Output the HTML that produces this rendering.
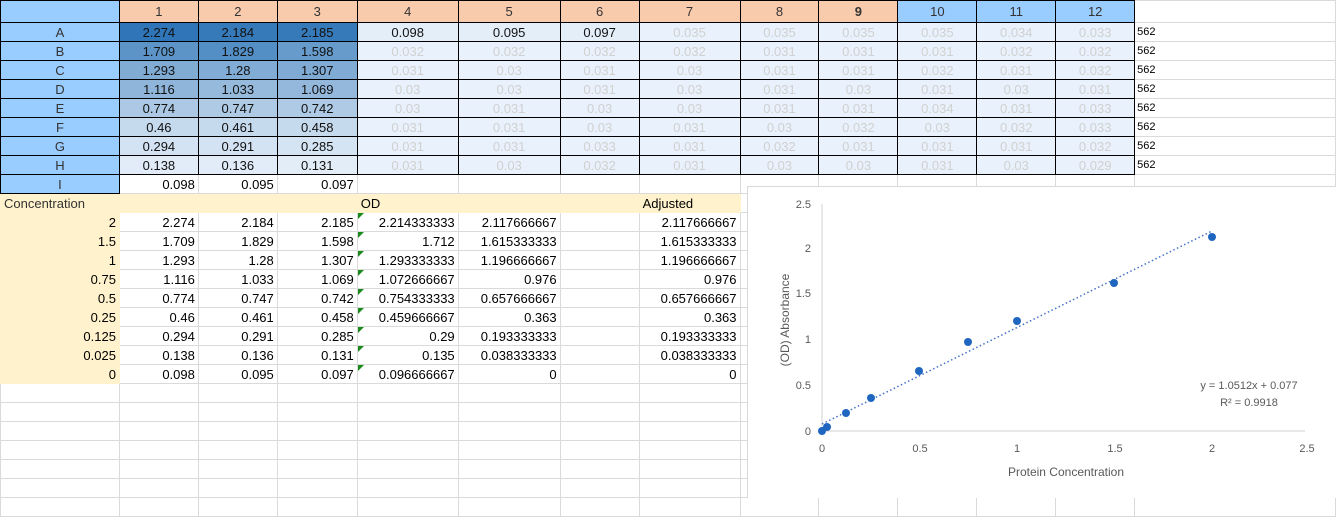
<!DOCTYPE html>
<html><head><meta charset="utf-8"><style>
html,body{margin:0;padding:0;background:#fff;width:1336px;height:498px;overflow:hidden;}
table{border-collapse:collapse;table-layout:fixed;font-family:"Liberation Sans",Arial,sans-serif;font-size:13px;position:absolute;left:0;top:0;}
td{border:1px solid #dadada;padding:0 3px;height:18px;white-space:nowrap;overflow:hidden;text-align:right;line-height:17px;}
tr.h td{height:21px;}
.rh{background:#99ccff;text-align:center;color:#333;border:1px solid #000;}
.ch{background:#f8cbad;text-align:center;color:#333;border:1px solid #000;}
.cb{background:#99ccff;text-align:center;color:#333;border:1px solid #000;}
.k{border:1px solid #000;text-align:center;color:#111;}
.g{border:1px solid #000;text-align:center;background:#e9f2fc;color:#d0d0d0;}
.y{background:#fff2cc;border-color:#fff2cc;}
.s{font-size:11px;text-align:left;padding-left:2px;}
.tri{position:relative;}
.tri:before{content:"";position:absolute;left:0;top:0;border-top:6px solid #1a8a1a;border-right:6px solid transparent;}
</style></head><body>
<table>
<colgroup><col style="width:119px"><col style="width:79px"><col style="width:79px"><col style="width:80px"><col style="width:101px"><col style="width:102px"><col style="width:79px"><col style="width:101px"><col style="width:79px"><col style="width:79px"><col style="width:79px"><col style="width:79px"><col style="width:79px"><col style="width:201px"></colgroup>
<tr class="h"><td class="rh"></td><td class="ch">1</td><td class="ch">2</td><td class="ch">3</td><td class="ch">4</td><td class="ch">5</td><td class="ch">6</td><td class="ch">7</td><td class="ch">8</td><td class="ch"><b>9</b></td><td class="cb">10</td><td class="cb">11</td><td class="cb">12</td><td></td></tr>
<tr><td class="rh">A</td><td class="k" style="background:#2f75b8">2.274</td><td class="k" style="background:#367ab9">2.184</td><td class="k" style="background:#367ab9">2.185</td><td class="k" style="background:#e4eef9">0.098</td><td class="k" style="background:#e4eef9">0.095</td><td class="k" style="background:#e4eef9">0.097</td><td class="g">0.035</td><td class="g">0.035</td><td class="g">0.035</td><td class="g">0.035</td><td class="g">0.034</td><td class="g">0.033</td><td class="s">562</td></tr>
<tr><td class="rh">B</td><td class="k" style="background:#5d94c7">1.709</td><td class="k" style="background:#538ec4">1.829</td><td class="k" style="background:#679bcb">1.598</td><td class="g">0.032</td><td class="g">0.032</td><td class="g">0.032</td><td class="g">0.032</td><td class="g">0.031</td><td class="g">0.031</td><td class="g">0.031</td><td class="g">0.032</td><td class="g">0.032</td><td class="s">562</td></tr>
<tr><td class="rh">C</td><td class="k" style="background:#80acd4">1.293</td><td class="k" style="background:#81acd5">1.28</td><td class="k" style="background:#7fabd4">1.307</td><td class="g">0.031</td><td class="g">0.03</td><td class="g">0.031</td><td class="g">0.03</td><td class="g">0.031</td><td class="g">0.031</td><td class="g">0.032</td><td class="g">0.031</td><td class="g">0.032</td><td class="s">562</td></tr>
<tr><td class="rh">D</td><td class="k" style="background:#8fb6da">1.116</td><td class="k" style="background:#96badc">1.033</td><td class="k" style="background:#93b8db">1.069</td><td class="g">0.03</td><td class="g">0.03</td><td class="g">0.031</td><td class="g">0.03</td><td class="g">0.031</td><td class="g">0.03</td><td class="g">0.031</td><td class="g">0.03</td><td class="g">0.031</td><td class="s">562</td></tr>
<tr><td class="rh">E</td><td class="k" style="background:#acc8e4">0.774</td><td class="k" style="background:#aecae5">0.747</td><td class="k" style="background:#aecae5">0.742</td><td class="g">0.03</td><td class="g">0.031</td><td class="g">0.03</td><td class="g">0.03</td><td class="g">0.031</td><td class="g">0.031</td><td class="g">0.034</td><td class="g">0.031</td><td class="g">0.033</td><td class="s">562</td></tr>
<tr><td class="rh">F</td><td class="k" style="background:#c6daee">0.46</td><td class="k" style="background:#c6daee">0.461</td><td class="k" style="background:#c6daee">0.458</td><td class="g">0.031</td><td class="g">0.031</td><td class="g">0.03</td><td class="g">0.031</td><td class="g">0.03</td><td class="g">0.032</td><td class="g">0.03</td><td class="g">0.032</td><td class="g">0.033</td><td class="s">562</td></tr>
<tr><td class="rh">G</td><td class="k" style="background:#d4e3f3">0.294</td><td class="k" style="background:#d4e3f3">0.291</td><td class="k" style="background:#d5e4f3">0.285</td><td class="g">0.031</td><td class="g">0.031</td><td class="g">0.033</td><td class="g">0.031</td><td class="g">0.032</td><td class="g">0.031</td><td class="g">0.031</td><td class="g">0.031</td><td class="g">0.032</td><td class="s">562</td></tr>
<tr><td class="rh">H</td><td class="k" style="background:#e1ecf8">0.138</td><td class="k" style="background:#e1ecf8">0.136</td><td class="k" style="background:#e2edf8">0.131</td><td class="g">0.031</td><td class="g">0.03</td><td class="g">0.032</td><td class="g">0.031</td><td class="g">0.03</td><td class="g">0.03</td><td class="g">0.031</td><td class="g">0.03</td><td class="g">0.029</td><td class="s">562</td></tr>
<tr><td class="rh">I</td><td>0.098</td><td>0.095</td><td>0.097</td><td style="border-top:1px solid #000"></td><td></td><td></td><td></td><td></td><td></td><td></td><td></td><td></td><td></td></tr>
<tr><td class="y" style="text-align:left;color:#333">Concentration</td><td class="y"></td><td class="y"></td><td class="y"></td><td class="y" style="text-align:left">OD</td><td class="y"></td><td class="y"></td><td class="y" style="text-align:left">Adjusted</td><td></td><td></td><td></td><td></td><td></td><td></td></tr>
<tr><td class="y">2</td><td>2.274</td><td>2.184</td><td>2.185</td><td class="tri">2.214333333</td><td>2.117666667</td><td></td><td>2.117666667</td><td></td><td></td><td></td><td></td><td></td><td></td></tr>
<tr><td class="y">1.5</td><td>1.709</td><td>1.829</td><td>1.598</td><td class="tri">1.712</td><td>1.615333333</td><td></td><td>1.615333333</td><td></td><td></td><td></td><td></td><td></td><td></td></tr>
<tr><td class="y">1</td><td>1.293</td><td>1.28</td><td>1.307</td><td class="tri">1.293333333</td><td>1.196666667</td><td></td><td>1.196666667</td><td></td><td></td><td></td><td></td><td></td><td></td></tr>
<tr><td class="y">0.75</td><td>1.116</td><td>1.033</td><td>1.069</td><td class="tri">1.072666667</td><td>0.976</td><td></td><td>0.976</td><td></td><td></td><td></td><td></td><td></td><td></td></tr>
<tr><td class="y">0.5</td><td>0.774</td><td>0.747</td><td>0.742</td><td class="tri">0.754333333</td><td>0.657666667</td><td></td><td>0.657666667</td><td></td><td></td><td></td><td></td><td></td><td></td></tr>
<tr><td class="y">0.25</td><td>0.46</td><td>0.461</td><td>0.458</td><td class="tri">0.459666667</td><td>0.363</td><td></td><td>0.363</td><td></td><td></td><td></td><td></td><td></td><td></td></tr>
<tr><td class="y">0.125</td><td>0.294</td><td>0.291</td><td>0.285</td><td class="tri">0.29</td><td>0.193333333</td><td></td><td>0.193333333</td><td></td><td></td><td></td><td></td><td></td><td></td></tr>
<tr><td class="y">0.025</td><td>0.138</td><td>0.136</td><td>0.131</td><td class="tri">0.135</td><td>0.038333333</td><td></td><td>0.038333333</td><td></td><td></td><td></td><td></td><td></td><td></td></tr>
<tr><td class="y">0</td><td>0.098</td><td>0.095</td><td>0.097</td><td class="tri">0.096666667</td><td>0</td><td></td><td>0</td><td></td><td></td><td></td><td></td><td></td><td></td></tr>
<tr><td></td><td></td><td></td><td></td><td></td><td></td><td></td><td></td><td></td><td></td><td></td><td></td><td></td><td></td></tr>
<tr><td></td><td></td><td></td><td></td><td></td><td></td><td></td><td></td><td></td><td></td><td></td><td></td><td></td><td></td></tr>
<tr><td></td><td></td><td></td><td></td><td></td><td></td><td></td><td></td><td></td><td></td><td></td><td></td><td></td><td></td></tr>
<tr><td></td><td></td><td></td><td></td><td></td><td></td><td></td><td></td><td></td><td></td><td></td><td></td><td></td><td></td></tr>
<tr><td></td><td></td><td></td><td></td><td></td><td></td><td></td><td></td><td></td><td></td><td></td><td></td><td></td><td></td></tr>
<tr><td></td><td></td><td></td><td></td><td></td><td></td><td></td><td></td><td></td><td></td><td></td><td></td><td></td><td></td></tr>
<tr><td></td><td></td><td></td><td></td><td></td><td></td><td></td><td></td><td></td><td></td><td></td><td></td><td></td><td></td></tr>
</table>
<svg width="1336" height="498" style="position:absolute;left:0;top:0" font-family="Liberation Sans, Arial, sans-serif" font-size="11" fill="#595959">
<rect x="747.5" y="186.5" width="600" height="320" fill="#fff" stroke="#d9d9d9"/>
<line x1="822" y1="204" x2="822" y2="431" stroke="#d0d0d0"/>
<line x1="822" y1="431" x2="1305" y2="431" stroke="#d0d0d0"/>
<g text-anchor="end"><text x="811" y="208">2.5</text><text x="811" y="252">2</text><text x="811" y="297">1.5</text><text x="811" y="343">1</text><text x="811" y="389">0.5</text><text x="811" y="435">0</text></g>
<g text-anchor="middle"><text x="822" y="452">0</text><text x="920" y="452">0.5</text><text x="1017" y="452">1</text><text x="1115" y="452">1.5</text><text x="1212" y="452">2</text><text x="1307" y="452">2.5</text>
<text x="1066" y="476" font-size="12">Protein Concentration</text>
<text transform="translate(789,320) rotate(-90)" font-size="12">(OD) Absorbance</text>
<text x="1249" y="389">y = 1.0512x + 0.077</text><text x="1249" y="406">R² = 0.9918</text></g>
<line x1="822" y1="424" x2="1212" y2="231" stroke="#4472c4" stroke-width="1.5" stroke-dasharray="1.5,2.5"/>
<g fill="#1f66c0"><circle cx="1212" cy="237" r="4"/><circle cx="1114" cy="283" r="4"/><circle cx="1017" cy="321" r="4"/><circle cx="968" cy="342" r="4"/><circle cx="919" cy="371" r="4"/><circle cx="871" cy="398" r="4"/><circle cx="846" cy="413" r="4"/><circle cx="827" cy="427" r="4"/><circle cx="822" cy="431" r="4"/></g>
</svg>
</body></html>
